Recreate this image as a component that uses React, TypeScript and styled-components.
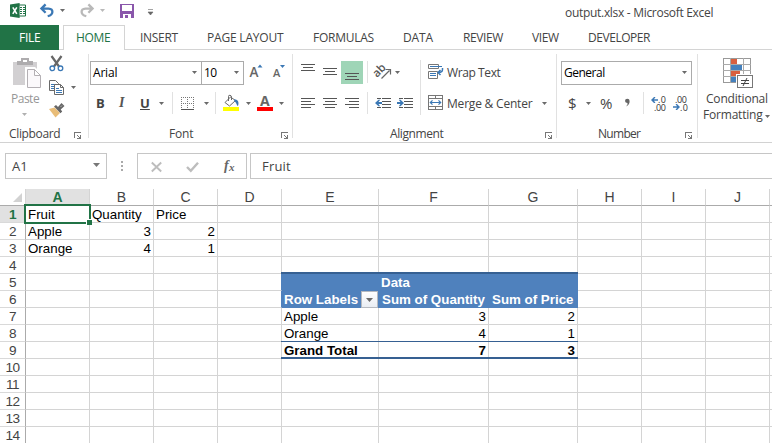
import React from "react";
import styled, { createGlobalStyle, css } from "styled-components";

const GlobalStyle = createGlobalStyle`
  *, *::before, *::after { box-sizing: border-box; }
  html, body { margin: 0; padding: 0; background: #fff; overflow: hidden; }
  svg { display: block; flex: none; overflow: visible; }
`;

const ui = `"Open Sans", "Noto Sans", sans-serif`;
const green = "#217346";
const ink = "#444";
const icon = "#6a6a6a";
const blue = "#3b78b5";

const Window = styled.div`
  width: 772px;
  height: 443px;
  overflow: hidden;
  display: flex;
  flex-direction: column;
  background: #fff;
  font: 12px/16px ${ui};
  color: ${ink};
`;

const Slot = styled.div<{ $gap?: number; $w?: number; $top?: number }>`
  flex: none;
  margin-left: ${(p) => p.$gap ?? 0}px;
  margin-top: ${(p) => p.$top ?? 0}px;
  ${(p) => p.$w !== undefined && `width: ${p.$w}px;`}
`;

const Label = styled(Slot)<{ $ls?: number; $size?: number; $color?: string; $bold?: boolean }>`
  white-space: nowrap;
  letter-spacing: ${(p) => p.$ls ?? 0}px;
  font-size: ${(p) => p.$size ?? 12}px;
  color: ${(p) => p.$color ?? ink};
  font-weight: ${(p) => (p.$bold ? 700 : 400)};
`;

const ItalicMark = styled(Slot)`
  font: italic 700 14px/16px "Liberation Serif", serif;
  color: #555;
`;

const TitleBar = styled.header`
  display: flex;
  height: 25px;
  flex: none;
`;

const TabStrip = styled.nav`
  display: flex;
  height: 25px;
  flex: none;
  background: linear-gradient(#d4d4d4, #d4d4d4) 0 24px / 100% 1px no-repeat;
`;

const Tab = styled.div<{ $w: number; $pad: number; $kind?: "file" | "active"; $ls: number }>`
  flex: none;
  width: ${(p) => p.$w}px;
  height: 25px;
  padding: 5px 0 0 ${(p) => p.$pad}px;
  white-space: nowrap;
  letter-spacing: ${(p) => p.$ls}px;
  ${(p) => p.$kind === "file" && css`background: ${green}; color: #fff; margin-right: 4px;`}
  ${(p) =>
    p.$kind === "active" &&
    css`
      background: #fff;
      color: ${green};
      border: 1px solid #d4d4d4;
      border-bottom: 0;
      padding-top: 4px;
    `}
`;

const Ribbon = styled.section`
  display: flex;
  height: 93px;
  flex: none;
  border-bottom: 1px solid #d2d2d2;
`;

const Group = styled.div<{ $w: number }>`
  flex: none;
  width: ${(p) => p.$w}px;
  height: 92px;
  display: flex;
  flex-direction: column;
  background: linear-gradient(#e1e1e1, #e1e1e1) 100% 4px / 1px 84px no-repeat;
`;

const GroupBody = styled.div`
  display: flex;
  height: 75px;
  flex: none;
`;

const Column = styled.div<{ $w?: number; $gap?: number }>`
  display: flex;
  flex-direction: column;
  flex: none;
  margin-left: ${(p) => p.$gap ?? 0}px;
  ${(p) => p.$w !== undefined && `width: ${p.$w}px;`}
`;

const Row = styled.div<{ $h?: number; $top?: number }>`
  display: flex;
  flex: none;
  align-items: flex-start;
  ${(p) => p.$h !== undefined && `height: ${p.$h}px;`}
  margin-top: ${(p) => p.$top ?? 0}px;
`;

const Divider = styled.div<{ $gap: number; $h: number; $top?: number }>`
  flex: none;
  width: 1px;
  height: ${(p) => p.$h}px;
  margin: ${(p) => p.$top ?? 0}px 0 0 ${(p) => p.$gap}px;
  background: #e1e1e1;
`;

const Combo = styled.div<{ $w: number; $gap?: number; $join?: boolean; $ls?: number }>`
  flex: none;
  display: flex;
  justify-content: space-between;
  width: ${(p) => p.$w}px;
  height: 24px;
  margin-left: ${(p) => p.$gap ?? 0}px;
  border: 1px solid #ababab;
  ${(p) => p.$join && "border-left: 0;"}
  padding: 3px 4px 0 2px;
  letter-spacing: ${(p) => p.$ls ?? 0}px;
  color: #000;
`;

const Highlight = styled.div`
  flex: none;
  width: 22px;
  height: 23px;
  margin-left: 4px;
  padding: 12px 0 0 4px;
  background: #9fd5b7;
`;

const FormulaBar = styled.section`
  display: flex;
  height: 46px;
  flex: none;
  padding: 10px 0 0 5px;
`;

const Field = styled.div<{ $w: number; $gap?: number }>`
  flex: none;
  display: flex;
  width: ${(p) => p.$w}px;
  height: 26px;
  margin-left: ${(p) => p.$gap ?? 0}px;
  border: 1px solid #c6c6c6;
`;

const Sheet = styled.main`
  display: grid;
  flex: none;
  grid-template-columns: 26px 64px 64px 64px 64px 97px 110px 89px 64px 64px 64px 64px;
  grid-auto-rows: 17px;
  font-family: "Liberation Sans", Arial, sans-serif;
`;

const Corner = styled.div`
  padding: 4px 0 0 13px;
  border-right: 1px solid #d4d4d4;
  border-bottom: 1px solid #ababab;
`;

const ColHead = styled.div<{ $on?: boolean }>`
  text-align: center;
  font-size: 14px;
  line-height: 17px;
  border-right: 1px solid #d4d4d4;
  border-bottom: 1px solid ${(p) => (p.$on ? green : "#ababab")};
  ${(p) => p.$on && `background: #e1e1e1; color: ${green}; font-weight: 700;`}
`;

const RowHead = styled.div<{ $on?: boolean }>`
  text-align: center;
  font-size: 13.6px;
  line-height: 17px;
  letter-spacing: -0.5px;
  border-right: 1px solid #ababab;
  border-bottom: 1px solid #d9d9d9;
  ${(p) => p.$on && `background: #e1e1e1; color: ${green}; font-weight: 700;`}
`;

type Look = "title" | "head" | "total" | "preTotal" | "abovePivot" | "leftOfHead" | "selected";

const rule = (thickness: number) => css`
  position: relative;
  &::after {
    content: "";
    position: absolute;
    left: -1px;
    right: -1px;
    bottom: -1px;
    height: ${thickness}px;
    background: #366092;
  }
`;

const headFill = css`
  background: #4f81bd;
  color: #fff;
  border-color: #4f81bd;
  font-weight: 700;
`;

const looks: Record<Look, ReturnType<typeof css>> = {
  title: headFill,
  head: css`
    ${headFill}
    padding-left: 3px;
  `,
  total: css`
    font-weight: 700;
    ${rule(2)}
  `,
  preTotal: rule(1),
  abovePivot: rule(2),
  leftOfHead: css`
    border-right-color: #4f81bd;
  `,
  selected: css`
    position: relative;
    &::before {
      content: "";
      position: absolute;
      inset: -2px;
      border: 2px solid ${green};
    }
    &::after {
      content: "";
      position: absolute;
      right: -3px;
      bottom: -3px;
      width: 6px;
      height: 6px;
      background: ${green};
      border: solid #fff;
      border-width: 1px 0 0 1px;
    }
  `,
};

const Cell = styled.div<{ $look?: Look; $num?: boolean; $ls?: number }>`
  display: flex;
  justify-content: ${(p) => (p.$num ? "flex-end" : "flex-start")};
  min-width: 0;
  padding: 0 ${(p) => (p.$num ? 2 : 0)}px 0 2px;
  font-size: 13.33px;
  line-height: 17px;
  white-space: nowrap;
  color: #000;
  border-right: 1px solid #d4d4d4;
  border-bottom: 1px solid #d4d4d4;
  ${(p) => p.$look && looks[p.$look]}
  ${(p) => p.$ls !== undefined && `letter-spacing: ${p.$ls}px;`}
`;

const FilterButton = styled.div`
  flex: none;
  width: 17px;
  height: 17px;
  margin-left: auto;
  padding: 6px 0 0 4px;
  background: linear-gradient(#fff, #e9edf3);
  border: 1px solid #b5b9c0;
`;

/* ---------- icons ---------- */

const Arrow = ({ c = "#6a6a6a", w = 5, h = 3 }: { c?: string; w?: number; h?: number }) => (
  <svg width={w} height={h} viewBox="0 0 5 3" preserveAspectRatio="none">
    <path d="M0 0h5L2.5 3z" fill={c} />
  </svg>
);

const Lines = ({ rows }: { rows: [number, number, number][] }) => (
  <svg width="14" height="12" shapeRendering="crispEdges">
    {rows.map(([x, y, w], i) => (
      <rect key={i} x={x} y={y} width={w} height="1" fill="#555" />
    ))}
  </svg>
);

const Launcher = () => (
  <svg width="8" height="7" shapeRendering="crispEdges">
    <path d="M.5 6V.5H7" fill="none" stroke="#777" />
    <path d="M3 3h1v1h1v1h1V3h1v4H3V6h2V5H4V4H3z" fill="#777" />
  </svg>
);

const ExcelLogo = () => (
  <svg width="16" height="15">
    <path d="M9 2h6.5v11H9" fill="#fff" stroke={green} />
    <path d="M10 4h2v1h-2zM10 6h2v1h-2zM10 8h2v1h-2zM10 10h2v1h-2zM13 4h2v1h-2zM13 6h2v1h-2zM13 8h2v1h-2zM13 10h2v1h-2z" fill={green} />
    <path d="M0 1.6L9.6 0v15L0 13.4z" fill={green} />
    <path d="M2.8 4.4l4 6.4M6.8 4.4l-4 6.4" stroke="#fff" strokeWidth="1.6" />
  </svg>
);

const Undo = () => (
  <svg width="14" height="13">
    <path d="M5.600.4L1.400 4.600l4.200 4.200M1.800 4.600h6.700c5.200.3 5.400 6.100-.8 7.600" fill="none" stroke={blue} strokeWidth="2.300" />
  </svg>
);

const Redo = () => (
  <svg width="14" height="13">
    <path d="M8.400.4l4.200 4.200-4.200 4.200M12.200 4.600H5.500c-5.200.3-5.400 6.100.8 7.600" fill="none" stroke="#b9b9b9" strokeWidth="2.300" />
  </svg>
);

const Save = () => (
  <svg width="14" height="14" shapeRendering="crispEdges">
    <path d="M0 0h14v14H0z" fill="#8a57ab" />
    <path d="M2 1h10v6H2z" fill="#fff" />
    <path d="M3 10h8v4H8v-3H5v3H3z" fill="#fff" />
  </svg>
);

const PasteIcon = () => (
  <svg width="29" height="30">
    <path d="M0 4h24v23H0z" fill="#d2d0d2" />
    <path d="M4 7V3h4V0h8v3h4v4z" fill="#aeacae" />
    <path d="M10 2h4v2h-4z" fill="#fff" />
    <path d="M12 9h10l7 7v14H12z" fill="#fff" />
    <path d="M14.5 11.5h7l6 6v12h-13zM21.500 11.500v6h6" fill="#fbf9fb" stroke="#b4b0b4" />
  </svg>
);

const Scissors = () => (
  <svg width="15" height="16">
    <path d="M2.500 0L10 10.500M12.500 0L5 10.500" stroke="#666" strokeWidth="2.200" />
    <circle cx="3.300" cy="12.300" r="2.300" fill="#fff" stroke={blue} strokeWidth="1.300" />
    <circle cx="11.500" cy="12.300" r="2.300" fill="#fff" stroke={blue} strokeWidth="1.300" />
  </svg>
);

const CopyIcon = () => (
  <svg width="16" height="15">
    <path d="M.5.5h6l3 3v7h-9z" fill="#fff" stroke={icon} />
    <path d="M2 4.500h4M2 6.500h4M2 8.500h3" stroke={blue} />
    <path d="M5.500 4.500h6l3 3v7h-9z" fill="#fff" stroke={icon} />
    <path d="M11.500 4.500v3h3" fill="none" stroke={icon} />
    <path d="M7 8.500h3M7 10.500h6M7 12.500h6" stroke={blue} />
  </svg>
);

const Brush = () => (
  <svg width="16" height="15">
    <path d="M0 6l5.500-1.500L11 10l-4.500 4.500z" fill="#e9bd78" />
    <path d="M5 3.500l2-1.500 2 2L12.500 0 15.500 3 11.700 6.500l1.500 2-1.700 1.800z" fill="#666" />
    <path d="M12 3.500l.8-.8" stroke="#fff" />
  </svg>
);

const GrowA = ({ up }: { up: boolean }) => (
  <svg width="13" height="14">
    {up ? (
      <text x="-.5" y="13" fontSize="13.500" fontWeight="600" fill="#666" fontFamily="Open Sans">A</text>
    ) : (
      <text x="0" y="13" fontSize="11" fontWeight="600" fill="#666" fontFamily="Open Sans">A</text>
    )}
    <path d={up ? "M7.500 3.500L10 .5l2.500 3z" : "M7 1h5L9.500 4z"} fill={blue} />
  </svg>
);

const BordersIcon = () => (
  <svg width="13" height="13" shapeRendering="crispEdges">
    <path d="M0 .5h13M0 6.500h13M.5 0v13M6.500 0v13M12.500 0v13" stroke="#777" strokeDasharray="1 1" />
    <path d="M0 12.500h13" stroke="#555" />
  </svg>
);

const Bucket = () => (
  <svg width="16" height="16">
    <path d="M7.500 2L2 7.500l4.500 3.500 6-5.500zM5.500 6V1.500q0-1.500 1.500-1.200T8.500 2v3" fill="#fff" stroke="#6a6a6a" />
    <path d="M11 4.500c3.500-.5 5.500 2 4 6.500-1.500-.5-1-3-3.500-4.500z" fill={blue} />
    <path d="M0 12h16v4H0z" fill="#ffff00" />
  </svg>
);

const FontColor = () => (
  <svg width="16" height="16">
    <text x="3" y="11" fontSize="14" fontWeight="700" fill="#666" fontFamily="Open Sans">A</text>
    <path d="M0 12h16v4H0z" fill="#f00" />
  </svg>
);

const Orientation = () => (
  <svg width="16" height="15">
    <text x="0" y="9.500" fontSize="11.500" fontWeight="600" fill="#555" fontFamily="Open Sans" transform="rotate(-45 4 7) translate(-2.500 1)">ab</text>
    <path d="M6.500 14.500l8-8M10.500 5.500h5V10.500" fill="none" stroke="#666" strokeWidth="1.200" />
  </svg>
);

const Indent = ({ out }: { out: boolean }) => (
  <svg width="16" height="11">
    <path d="M2 .5h4M7 .5h9M7 3.500h9M7 6.500h9M2 9.500h4M7 9.500h9" stroke="#555" shapeRendering="crispEdges" />
    <path d={out ? "M0 5l3.500-3.300h1.700L3.500 4H7v2H3.500l1.700 2.300H3.500z" : "M7 5L3.500 1.700H1.800L3.500 4H0v2h3.500L1.800 8.300h1.700z"} fill={blue} />
  </svg>
);

const WrapIcon = () => (
  <svg width="16" height="15">
    <path d="M.5.500h10v4H.500z" fill="none" stroke="#777" />
    <path d="M.5 7.500h9v7h-9z" fill="none" stroke="#777" />
    <path d="M2 2.500h12M2 9.500h6M2 11.500h6" stroke={blue} />
    <path d="M14.500 4v1.500q0 3-4 3M12.500 6L10 8.500l2.500 2.500" fill="none" stroke={blue} strokeWidth="1.500" />
  </svg>
);

const MergeIcon = () => (
  <svg width="15" height="15">
    <path d="M.5.5h14v14H.5zM.5 3.500h14M.5 11.500h14M7.500 .5v3M7.500 11.500v3" fill="none" stroke="#777" shapeRendering="crispEdges" />
    <path d="M2 7.500h11M4.500 5.300L2.300 7.500l2.200 2.200M10.500 5.300l2.200 2.200-2.200 2.200" fill="none" stroke={blue} strokeWidth="1.200" />
  </svg>
);

const Decimals = ({ more }: { more: boolean }) => (
  <svg width="16" height="14" fontFamily="Open Sans" fontSize="9" fill="#333">
    <text x={more ? 7 : 2} y="6" textLength={more ? 8 : 12}>{more ? ".0" : ".00"}</text>
    <text x={more ? 3 : 7} y="13.500" textLength={more ? 12 : 8}>{more ? ".00" : ".0"}</text>
    {more ? (
      <path d="M0 3l3-3h1.500L3 2.300h4v1.400H3L4.500 6H3z" fill={blue} />
    ) : (
      <path d="M7 10L4 7H2.500L4 9.300H0v1.400h4L2.500 13H4z" fill={blue} />
    )}
  </svg>
);

const Conditional = () => (
  <svg width="30" height="30" shapeRendering="crispEdges">
    <path d="M.5.5h27v24H.5z" fill="#fff" stroke="#999" />
    <path d="M0 6.500h28M0 12.500h28M0 18.500h28M7.500 0v25M20.500 0v25" stroke="#aaa" />
    <path d="M8 1h6v5H8zM8 13h9v5H8z" fill="#d9603f" />
    <path d="M8 7h11v5H8zM8 19h5v5H8z" fill="#4581bd" />
    <path d="M13 16h17v14H13z" fill="#fff" />
    <path d="M14.500 17.500h15v12h-15z" fill="#fff" stroke="#777" />
    <path d="M18 22.500h8M18 25.500h8M24 20l-4 8" stroke="#444" shapeRendering="auto" />
  </svg>
);

const Fx = () => (
  <svg width="15" height="15" fill="#666" fontFamily="Liberation Serif" fontStyle="italic">
    <text x="1" y="11" fontSize="14" fontWeight="700">f</text>
    <text x="6" y="12" fontSize="11" fontWeight="700">x</text>
  </svg>
);

/* ---------- data ---------- */

const columns = ["A", "B", "C", "D", "E", "F", "G", "H", "I", "J", "K"];

const values: Record<string, string> = {
  A1: "Fruit", B1: "Quantity", C1: "Price",
  A2: "Apple", B2: "3", C2: "2",
  A3: "Orange", B3: "4", C3: "1",
  F5: "Data",
  E6: "Row Labels", F6: "Sum of Quantity", G6: "Sum of Price",
  E7: "Apple", F7: "3", G7: "2",
  E8: "Orange", F8: "4", G8: "1",
  E9: "Grand Total", F9: "7", G9: "3",
};

function lookOf(col: string, row: number): Look | undefined {
  if (col === "A" && row === 1) return "selected";
  if (col === "D" && (row === 5 || row === 6)) return "leftOfHead";
  if (!"EFG".includes(col)) return undefined;
  if (row === 4) return "abovePivot";
  if (row === 6 && col !== "E") return "head";
  if (row === 5 || row === 6) return "title";
  if (row === 8) return "preTotal";
  if (row === 9) return "total";
  return undefined;
}

const tabs = [
  { name: "FILE", w: 59, pad: 19, ls: -0.3, kind: "file" as const },
  { name: "HOME", w: 62, pad: 12, ls: -0.3, kind: "active" as const },
  { name: "INSERT", w: 67, pad: 15, ls: -0.3 },
  { name: "PAGE LAYOUT", w: 106, pad: 15, ls: -0.2 },
  { name: "FORMULAS", w: 90, pad: 15, ls: -0.25 },
  { name: "DATA", w: 60, pad: 15, ls: -0.1 },
  { name: "REVIEW", w: 69, pad: 15, ls: -0.4 },
  { name: "VIEW", w: 56, pad: 15, ls: -0.35 },
  { name: "DEVELOPER", w: 92, pad: 15, ls: -0.45 },
];

export default function App() {
  return (
    <Window>
      <GlobalStyle />
      <TitleBar>
        <Slot $gap={10} $top={3} $w={16}><ExcelLogo /></Slot>
        <Slot $gap={14} $top={4} $w={14}><Undo /></Slot>
        <Slot $gap={6} $top={9} $w={5}><Arrow /></Slot>
        <Slot $gap={15} $top={4} $w={14}><Redo /></Slot>
        <Slot $gap={6} $top={9} $w={5}><Arrow c="#b9b9b9" /></Slot>
        <Slot $gap={15} $top={4} $w={14}><Save /></Slot>
        <Slot $gap={14} $top={9} $w={5}>
          <svg width="5" height="6"><path d="M0 .5h5M0 3h5L2.500 6z" fill="#666" stroke="#666" strokeWidth=".6" /></svg>
        </Slot>
        <Label $gap={412} $top={5} $ls={-0.3}>output.xlsx - Microsoft Excel</Label>
      </TitleBar>

      <TabStrip>
        {tabs.map((t) => (
          <Tab key={t.name} $w={t.w} $pad={t.pad} $ls={t.ls} $kind={t.kind}>{t.name}</Tab>
        ))}
      </TabStrip>

      <Ribbon>
        <Group $w={89}>
          <GroupBody>
            <Column $w={49}>
              <Slot $gap={13} $top={8}><PasteIcon /></Slot>
              <Label $gap={11} $top={3} $ls={-0.5} $color="#979797">Paste</Label>
              <Slot $gap={22} $top={6}><Arrow c="#b0b0b0" /></Slot>
            </Column>
            <Column>
              <Slot $top={6}><Scissors /></Slot>
              <Row $h={23} $top={8}>
                <CopyIcon />
                <Slot $gap={6} $top={6}><Arrow /></Slot>
              </Row>
              <Slot><Brush /></Slot>
            </Column>
          </GroupBody>
          <Row>
            <Label $gap={9} $top={1} $ls={-0.35} $w={65}>Clipboard</Label>
            <Slot $top={7}><Launcher /></Slot>
          </Row>
        </Group>

        <Group $w={204}>
          <GroupBody>
            <Column>
              <Row $h={31} $top={11}>
                <Combo $w={112} $gap={1} $ls={-0.2}>Arial<Slot $top={6}><Arrow /></Slot></Combo>
                <Combo $w={42} $join $ls={-0.5}>10<Slot $top={6}><Arrow /></Slot></Combo>
                <Slot $gap={6} $top={3} $w={13}><GrowA up /></Slot>
                <Slot $gap={10} $top={3} $w={13}><GrowA up={false} /></Slot>
              </Row>
              <Row>
                <Label $gap={7} $top={3} $w={23} $bold $size={13}>B</Label>
                <ItalicMark $w={21} $top={3}>I</ItalicMark>
                <Label $w={19} $top={3} $size={13} $bold><u>U</u></Label>
                <Slot $w={5} $top={10}><Arrow /></Slot>
                <Divider $gap={8} $h={22} />
                <Slot $gap={8} $w={13} $top={5}><BordersIcon /></Slot>
                <Slot $gap={10} $w={5} $top={10}><Arrow /></Slot>
                <Divider $gap={6} $h={22} />
                <Slot $gap={7} $w={16} $top={3}><Bucket /></Slot>
                <Slot $gap={7} $w={5} $top={10}><Arrow /></Slot>
                <Slot $gap={6} $w={16} $top={3}><FontColor /></Slot>
                <Slot $gap={6} $w={5} $top={10}><Arrow /></Slot>
              </Row>
            </Column>
          </GroupBody>
          <Row>
            <Label $gap={80} $top={1} $ls={-0.2} $w={112}>Font</Label>
            <Slot $top={7}><Launcher /></Slot>
          </Row>
        </Group>

        <Group $w={264}>
          <GroupBody>
            <Column $w={127}>
              <Row $h={31} $top={11}>
                <Slot $gap={8} $top={3} $w={14}><Lines rows={[[0, 0, 14], [2, 3, 10], [0, 6, 14]]} /></Slot>
                <Slot $gap={8} $top={7} $w={14}><Lines rows={[[0, 0, 14], [2, 3, 10], [0, 6, 14]]} /></Slot>
                <Highlight><Lines rows={[[0, 0, 14], [2, 3, 10], [0, 6, 14]]} /></Highlight>
                <Divider $gap={4} $h={22} />
                <Slot $gap={7} $top={3} $w={16}><Orientation /></Slot>
                <Slot $gap={4} $top={10}><Arrow /></Slot>
              </Row>
              <Row>
                <Slot $gap={8} $top={6} $w={14}><Lines rows={[[0, 0, 14], [0, 3, 10], [0, 6, 14], [0, 9, 10]]} /></Slot>
                <Slot $gap={8} $top={6} $w={14}><Lines rows={[[0, 0, 14], [2, 3, 10], [0, 6, 14], [2, 9, 10]]} /></Slot>
                <Slot $gap={8} $top={6} $w={14}><Lines rows={[[0, 0, 14], [4, 3, 10], [0, 6, 14], [4, 9, 10]]} /></Slot>
                <Divider $gap={8} $h={22} />
                <Slot $gap={7} $top={6} $w={16}><Indent out /></Slot>
                <Slot $gap={6} $top={6} $w={16}><Indent out={false} /></Slot>
              </Row>
            </Column>
            <Divider $gap={0} $h={55} $top={10} />
            <Column $gap={7}>
              <Row $h={31} $top={14}>
                <WrapIcon />
                <Label $gap={3} $top={1} $ls={-0.4}>Wrap Text</Label>
              </Row>
              <Row>
                <MergeIcon />
                <Label $gap={4} $top={1} $ls={-0.2} $w={94}>Merge &amp; Center</Label>
                <Slot $gap={1} $top={7}><Arrow /></Slot>
              </Row>
            </Column>
          </GroupBody>
          <Row>
            <Label $gap={97} $top={1} $ls={-0.4} $w={155}>Alignment</Label>
            <Slot $top={7}><Launcher /></Slot>
          </Row>
        </Group>

        <Group $w={141}>
          <GroupBody>
            <Column>
              <Row $h={31} $top={11}>
                <Combo $w={131} $gap={4} $ls={-0.5}>General<Slot $top={6}><Arrow /></Slot></Combo>
              </Row>
              <Row>
                <Label $gap={11} $top={3} $size={15} $w={18}>$</Label>
                <Slot $w={14} $top={10}><Arrow /></Slot>
                <Label $w={25} $top={3} $size={15}>%</Label>
                <Slot $w={5} $top={7}>
                  <svg width="5" height="8"><path d="M0 2a2.200 2.200 0 0 1 4.600 0q.2 3.500-3.600 5.500Q3 5.500 2.500 4 .2 4 0 2z" fill="#666" /></svg>
                </Slot>
                <Divider $gap={13} $h={22} />
                <Slot $gap={7} $top={5} $w={16}><Decimals more /></Slot>
                <Slot $gap={6} $top={5} $w={16}><Decimals more={false} /></Slot>
              </Row>
            </Column>
          </GroupBody>
          <Row>
            <Label $gap={41} $top={1} $ls={-0.7} $w={87}>Number</Label>
            <Slot $top={7}><Launcher /></Slot>
          </Row>
        </Group>

        <Column>
          <Slot $gap={25} $top={8}><Conditional /></Slot>
          <Label $gap={8} $top={3} $ls={-0.2}>Conditional</Label>
          <Row>
            <Label $gap={5} $ls={-0.2} $w={62}>Formatting</Label>
            <Slot $top={8}><Arrow /></Slot>
          </Row>
        </Column>
      </Ribbon>

      <FormulaBar>
        <Field $w={102}>
          <Label $gap={6} $top={4} $w={81} $size={13}>A1</Label>
          <Slot $top={9}><Arrow c="#777" w={7} h={4} /></Slot>
        </Field>
        <Slot $gap={14} $top={8} $w={16}>
          <svg width="2" height="11"><path d="M0 0h2v2H0zM0 4h2v2H0zM0 8h2v2H0z" fill="#aaa" /></svg>
        </Slot>
        <Field $w={110}>
          <Slot $gap={13} $top={8} $w={35}><svg width="11" height="10"><path d="M.8.5l9.400 9M10.200.500L.8 9.500" stroke="#bdbdbd" strokeWidth="1.900" /></svg></Slot>
          <Slot $w={37} $top={8}><svg width="13" height="10"><path d="M1 5l3.800 3.800L12 .8" fill="none" stroke="#bdbdbd" strokeWidth="2.400" /></svg></Slot>
          <Slot $top={5}><Fx /></Slot>
        </Field>
        <Field $w={530} $gap={3}>
          <Label $gap={11} $top={4} $ls={0.2} $size={13}>Fruit</Label>
        </Field>
      </FormulaBar>

      <Sheet>
        <Corner><svg width="9" height="9"><path d="M9 0v9H0z" fill="#d2d2d2" /></svg></Corner>
        {columns.map((c) => <ColHead key={c} $on={c === "A"}>{c === "K" ? "" : c}</ColHead>)}
        {Array.from({ length: 14 }, (_, i) => i + 1).map((r) => (
          <React.Fragment key={r}>
            <RowHead $on={r === 1}>{r}</RowHead>
            {columns.map((c) => {
              const v = values[c + r] ?? "";
              return (
                <Cell key={c} $look={lookOf(c, r)} $num={/^\d+$/.test(v)}>
                  {v}
                  {c + r === "E6" && <FilterButton><Arrow w={7} h={4} /></FilterButton>}
                </Cell>
              );
            })}
          </React.Fragment>
        ))}
      </Sheet>
    </Window>
  );
}
